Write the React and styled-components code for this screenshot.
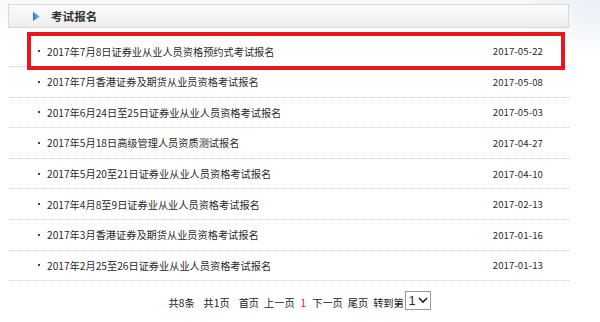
import React from "react";
import styled, { createGlobalStyle } from "styled-components";

const items = [
  { title: "2017年7月8日证券业从业人员资格预约式考试报名", date: "2017-05-22", mark: true },
  { title: "2017年7月香港证券及期货从业员资格考试报名", date: "2017-05-08" },
  { title: "2017年6月24日至25日证券业从业人员资格考试报名", date: "2017-05-03" },
  { title: "2017年5月18日高级管理人员资质测试报名", date: "2017-04-27" },
  { title: "2017年5月20至21日证券业从业人员资格考试报名", date: "2017-04-10" },
  { title: "2017年4月8至9日证券业从业人员资格考试报名", date: "2017-02-13" },
  { title: "2017年3月香港证券及期货从业员资格考试报名", date: "2017-01-16" },
  { title: "2017年2月25至26日证券业从业人员资格考试报名", date: "2017-01-13" },
];

const Global = createGlobalStyle`
  html, body {
    margin: 0;
    padding: 0;
    background: #fff;
  }
  body {
    font-family: "Noto Sans CJK SC", "Liberation Sans", sans-serif;
    color: #222;
  }
`;

const Page = styled.div`
  width: 600px;
  height: 322px;
  overflow: hidden;
  box-sizing: border-box;
  padding: 4px 0 0 8px;
  background:
    radial-gradient(ellipse 90px 60px at 100% 0%, #e9f0f7 0%, rgba(255,255,255,0) 100%),
    linear-gradient(#f7f8f9 0px, #fff 40px);
`;

const Panel = styled.div`
  width: 561px;
`;

const Header = styled.div`
  height: 22px;
  display: flex;
  align-items: center;
  gap: 11px;
  padding-left: 24px;
  border: 1px solid #dadada;
  background: linear-gradient(#fbfbfb, #ededed);
`;

const Title = styled.span`
  font-size: 11.5px;
  font-weight: bold;
  color: #333;
  letter-spacing: 0.1px;
`;

const List = styled.ul`
  list-style: none;
  margin: 0;
  padding: 8.4px 0 0;
`;

const Row = styled.li`
  position: relative;
  height: 29.6px;
  display: flex;
  align-items: center;
  justify-content: space-between;
  padding: 0 26px 0 30px;
  border-bottom: 1px dotted #cfcfcf;
  font-size: 10.2px;
  color: #2a2a2a;

  &::after {
    content: "";
    display: ${(p) => (p.$mark ? "block" : "none")};
    position: absolute;
    left: 19px;
    right: 4px;
    top: -4px;
    bottom: -4px;
    border: 4px solid #e8161f;
    pointer-events: none;
  }
`;

const Name = styled.span`
  display: flex;
  align-items: center;
  gap: 7px;
  &::before {
    content: "";
    width: 2px;
    height: 2px;
    background: #444;
  }
`;

const Date = styled.span`
  font-size: 9.6px;
  letter-spacing: 0.1px;
`;

const Pager = styled.div`
  display: flex;
  align-items: center;
  justify-content: center;
  width: 600px;
  margin-left: -8px;
  padding-top: 10px;
  font-size: 10.2px;
  color: #222;
`;

const PageItem = styled.span`
  margin-right: ${(p) => p.$gap ?? 5}px;
  color: ${(p) => (p.$current ? "#e8161f" : "#222")};
`;

const Jump = styled.span`
  display: inline-flex;
  align-items: center;
  gap: 3px;
  margin-left: 1px;
  margin-bottom: 4px;
  height: 17px;
  padding: 0 2px 0 3px;
  border: 1px solid #999;
  background: #fff;
  font-family: "Liberation Sans", sans-serif;
  font-size: 12px;
`;

function Arrow() {
  return (
    <svg width="7" height="9" viewBox="0 0 7 9">
      <defs>
        <linearGradient id="ag" x1="0" y1="0" x2="1" y2="0">
          <stop offset="0" stopColor="#2f6fcf" />
          <stop offset="1" stopColor="#8fbdf0" />
        </linearGradient>
      </defs>
      <path d="M0 0 L7 4.5 L0 9 Z" fill="url(#ag)" />
    </svg>
  );
}

function Chevron() {
  return (
    <svg width="10" height="7" viewBox="0 0 10 7">
      <path d="M1 1 L5 5 L9 1" fill="none" stroke="#222" strokeWidth="1.6" />
    </svg>
  );
}

export default function App() {
  return (
    <Page>
      <Global />
      <Panel>
        <Header>
          <Arrow />
          <Title>考试报名</Title>
        </Header>
        <List>
          {items.map((it) => (
            <Row key={it.title} $mark={it.mark}>
              <Name>{it.title}</Name>
              <Date>{it.date}</Date>
            </Row>
          ))}
        </List>
      </Panel>
      <Pager>
        <PageItem $gap={9}>共8条</PageItem>
        <PageItem $gap={9}>共1页</PageItem>
        <PageItem>首页</PageItem>
        <PageItem $gap={6}>上一页</PageItem>
        <PageItem $current $gap={6}>1</PageItem>
        <PageItem>下一页</PageItem>
        <PageItem>尾页</PageItem>
        <PageItem $gap={0}>转到第</PageItem>
        <Jump>
          1
          <Chevron />
        </Jump>
      </Pager>
    </Page>
  );
}
